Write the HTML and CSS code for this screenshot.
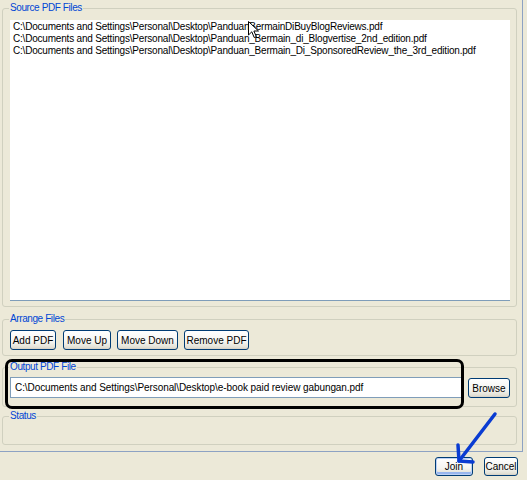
FILE: index.html
```html
<!DOCTYPE html>
<html lang="en">
<head>
    <meta charset="UTF-8">
    <title>Join PDF</title>
    <link rel="stylesheet" href="styles.css">
</head>
<body>
    <div class="dialog">
        <div class="panel">
            <!-- files to be joined -->
            <fieldset class="group group-source">
                <legend>Source PDF Files</legend>
                <ul class="file-list">
                    <li>C:\Documents and Settings\Personal\Desktop\PanduanBermainDiBuyBlogReviews.pdf</li>
                    <li>C:\Documents and Settings\Personal\Desktop\Panduan_Bermain_di_Blogvertise_2nd_edition.pdf</li>
                    <li>C:\Documents and Settings\Personal\Desktop\Panduan_Bermain_Di_SponsoredReview_the_3rd_edition.pdf</li>
                </ul>
            </fieldset>

            <fieldset class="group group-arrange">
                <legend>Arrange Files</legend>
                <div class="btn-row">
                    <button class="btn btn-add">Add PDF</button>
                    <button class="btn btn-up">Move Up</button>
                    <button class="btn btn-down">Move Down</button>
                    <button class="btn btn-remove">Remove PDF</button>
                </div>
            </fieldset>

            <fieldset class="group group-output">
                <legend>Output PDF File</legend>
                <div class="output-row">
                    <div class="path-field">C:\Documents and Settings\Personal\Desktop\e-book paid review gabungan.pdf</div>
                    <button class="btn btn-browse">Browse</button>
                </div>
            </fieldset>

            <fieldset class="group group-status">
                <legend>Status</legend>
            </fieldset>
        </div>

        <div class="actions">
            <button class="btn btn-join">Join</button>
            <button class="btn btn-cancel">Cancel</button>
        </div>

        <!-- marker drawn over the output box -->
        <div class="highlight-box"></div>

        <svg class="pointer-arrow" width="70" height="70" viewBox="0 0 70 70">
            <g fill="none" stroke="#0a3cd2" stroke-width="3.5" stroke-linecap="round" stroke-linejoin="round">
                <path d="M55 9 L19 56"/>
                <path d="M18 40 L19 56 L33 57"/>
            </g>
        </svg>

        <svg class="cursor" width="12" height="18" viewBox="0 0 12 18">
            <path d="M0.5 0.5 L0.5 14 L3.8 10.8 L6.2 16.5 L8.3 15.6 L5.9 10 L10.5 10 Z" fill="#fff" stroke="#000" stroke-width="1"/>
        </svg>
    </div>
</body>
</html>
```

FILE: styles.css
```css
* {
    box-sizing: border-box;
}

body {
    margin: 0;
    background-color: #ece9d8;
    font-family: "Liberation Sans", Arial, sans-serif;
    font-size: 10px;
    color: #000;
}

.dialog {
    position: relative;
    width: 527px;
    height: 480px;
}

.panel {
    width: 523px;
    height: 452px;
    padding: 2px 5px 0 2px;
    border-right: 1px solid #8da2c3;
    border-bottom: 1px solid #8da2c3;
    display: flex;
    flex-direction: column;
}

.group {
    margin: 0;
    border: 1px solid #d0d0bf;
    border-radius: 3px;
    padding: 6px 6px 5px 7px;
}

.group legend {
    color: #0046d5;
    line-height: 12px;
    letter-spacing: -0.4px;
    padding: 0 1px;
    margin-left: -1px;
}

.group-arrange {
    margin-top: 6px;
    padding-top: 5px;
}

.group-output {
    margin-top: 5px;
    padding-top: 4px;
    padding-bottom: 8px;
}

.group-status {
    margin-top: 3px;
    padding: 0 6px 22px 7px;
}

/* file list */
.file-list {
    list-style: none;
    margin: 0;
    padding: 1px 3px;
    height: 281px;
    background: #fff;
    border-bottom: 1px solid #7f9db9;
}

.file-list li {
    line-height: 12px;
    letter-spacing: -0.2px;
    white-space: nowrap;
}

/* buttons */
.btn-row {
    display: flex;
    gap: 6px;
}

.btn {
    font-family: inherit;
    font-size: 10px;
    color: #000;
    height: 20px;
    padding: 0;
    white-space: nowrap;
    border: 1px solid #003c74;
    border-radius: 3px;
    background: linear-gradient(#ffffff, #f4f4f0 60%, #e3e1d6 90%, #d6d0c5);
}

.btn-add { width: 46px; }
.btn-up { width: 48px; margin-left: 1px; }
.btn-down { width: 61px; }
.btn-remove { width: 65px; }

.output-row {
    display: flex;
    gap: 6px;
}

.path-field {
    width: 452px;
    height: 21px;
    padding: 0 4px;
    line-height: 19px;
    letter-spacing: -0.08px;
    background: #fff;
    border: 1px solid #7f9db9;
    white-space: nowrap;
}

.btn-browse {
    width: 42px;
    margin-top: 1px;
}

.actions {
    display: flex;
    justify-content: flex-end;
    gap: 11px;
    padding: 5px 9px 0 0;
}

.actions .btn {
    height: 19px;
}

.btn-join {
    width: 38px;
    box-shadow: inset 0 0 0 1px #bcd1f6, inset 0 -2px 0 1px #98b6ee;
}

.btn-cancel {
    width: 34px;
}

/* overlays */
.highlight-box {
    position: absolute;
    left: 5px;
    top: 359px;
    width: 459px;
    height: 50px;
    border: 3px solid #000;
    border-radius: 7px;
}

.pointer-arrow {
    position: absolute;
    left: 440px;
    top: 405px;
}

.cursor {
    position: absolute;
    left: 248px;
    top: 21px;
}
```
